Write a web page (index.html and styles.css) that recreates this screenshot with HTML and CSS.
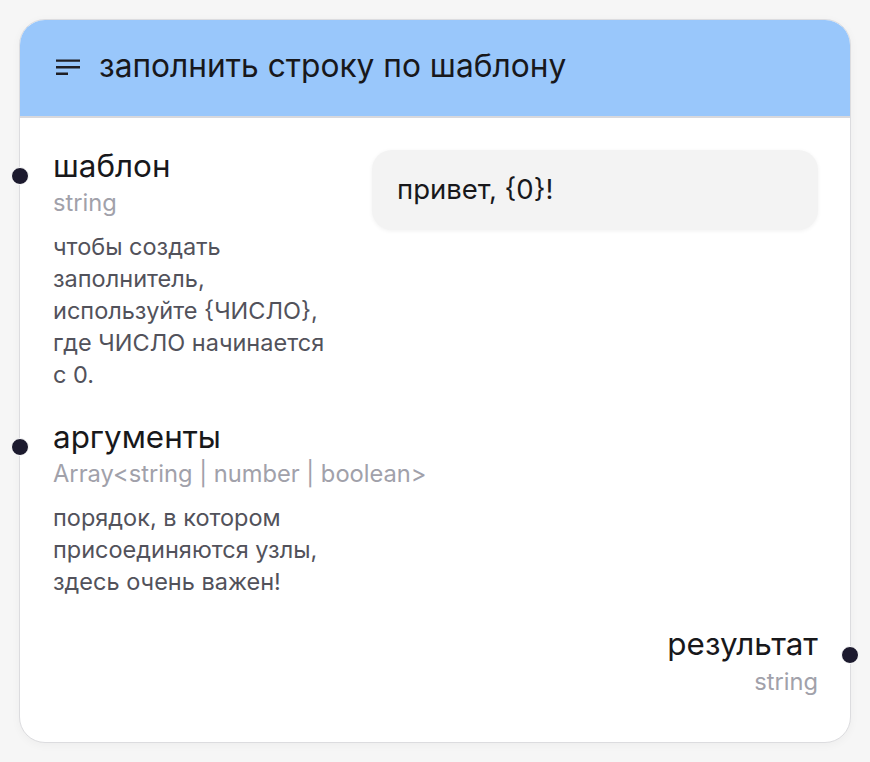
FILE: index.html
```html
<!DOCTYPE html>
<html lang="ru">
<head>
<meta charset="utf-8">
<link rel="stylesheet" href="styles.css">
</head>
<body>
<div class="card">
  <div class="header">
    <svg class="menu" width="24" height="24" viewBox="0 0 24 24"><path d="M0 6.6h24M0 13.2h24M0 19.8h12" stroke="#1f1f24" stroke-width="2.4" fill="none"/></svg>
    <span class="title">заполнить строку по шаблону</span>
  </div>
  <div class="body">
    <div class="row">
      <span class="dot dot-left"></span>
      <div class="field">
        <div class="label">шаблон</div>
        <div class="type">string</div>
        <div class="desc">чтобы создать заполнитель, используйте {ЧИСЛО}, где ЧИСЛО начинается с 0.</div>
      </div>
      <div class="input">привет, {0}!</div>
    </div>
    <div class="row">
      <span class="dot dot-left"></span>
      <div class="field">
        <div class="label">аргументы</div>
        <div class="type nowrap">Array&lt;string | number | boolean&gt;</div>
        <div class="desc">порядок, в котором присоединяются узлы, здесь очень важен!</div>
      </div>
    </div>
    <div class="row out">
      <div class="field right">
        <div class="label">результат</div>
        <div class="type">string</div>
      </div>
      <span class="dot dot-right"></span>
    </div>
  </div>
</div>
</body>
</html>
```
FILE: styles.css
```css
* { box-sizing: border-box; }
html, body { margin: 0; }
body {
  background: #f6f6f6;
  font-family: Inter, "Noto Sans", sans-serif;
  padding: 19px;
  width: 870px;
  height: 762px;
}
.card {
  width: 832px;
  height: 724px;
  background: #fff;
  border: 1px solid #dcdcdf;
  border-radius: 26px;
  box-shadow: 0 2px 10px rgba(0,0,0,0.04);
}
.header {
  height: 98px;
  background: #99c7fb;
  border-radius: 25px 25px 0 0;
  border-bottom: 2px solid #d8d8dc;
  display: flex;
  align-items: center;
  padding-left: 36px;
  padding-bottom: 5px;
  gap: 19px;
}
.menu { display: block; flex: none; }
.title {
  font-size: 31.7px;
  color: #18181b;
  line-height: 40px;
}
.body {
  padding: 33px 32px 0 33px;
  display: flex;
  flex-direction: column;
  gap: 31px;
}
.row {
  position: relative;
  display: flex;
  gap: 34px;
  align-items: flex-start;
}
.field { width: 285px; flex: none; }
.label {
  font-size: 31.4px;
  color: #18181b;
  line-height: 34px;
  margin-top: -2px;
}
.type {
  font-size: 23.7px;
  color: #a1a1aa;
  line-height: 32px;
  margin-top: 3.5px;
}
.nowrap { white-space: nowrap; }
.desc {
  font-size: 23.5px;
  color: #52525b;
  line-height: 32px;
  margin-top: 12.5px;
}
.input {
  flex: 1;
  background: #f3f3f3;
  border-radius: 20px;
  height: 80px;
  margin-top: -1px;
  display: flex;
  align-items: center;
  padding-left: 25px;
  padding-bottom: 3px;
  font-size: 27.5px;
  color: #18181b;
  box-shadow: 0 1px 4px rgba(0,0,0,0.06);
}
.out { justify-content: flex-end; margin-top: 0; }
.out .type { margin-top: 5px; }
.right { text-align: right; width: auto; }
.dot {
  position: absolute;
  width: 18px;
  height: 18px;
  border-radius: 50%;
  background: #1c1a2e;
  border: 1px solid #fff;
  top: 16px;
}
.dot-left { left: -42px; }
.dot-right { right: -41px; top: 17px; }
```
